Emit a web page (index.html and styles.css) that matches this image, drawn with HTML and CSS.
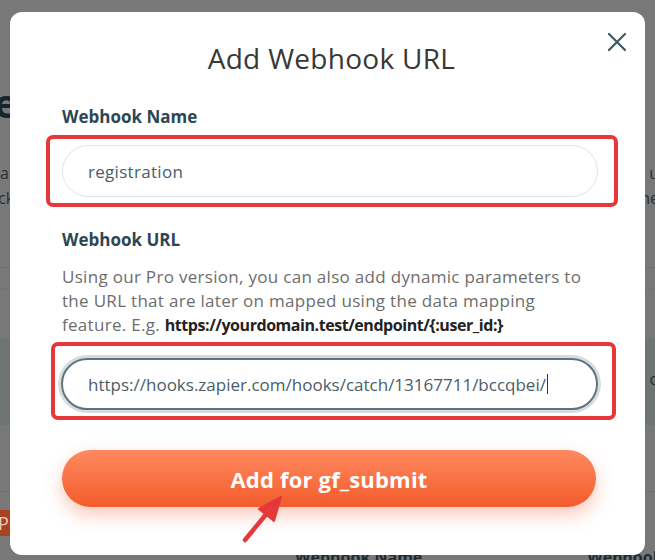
FILE: index.html
```html
<!DOCTYPE html>
<html lang="en">
<head>
<meta charset="utf-8">
<title>Add Webhook URL</title>
<link rel="stylesheet" href="styles.css">
</head>
<body>
<div class="page">
  <div class="bg-row r-head"><span class="bg-h">e</span></div>
  <div class="bg-row r-t1"><span class="bg-t">a</span><span class="bg-t">u</span></div>
  <div class="bg-row r-t2"><span class="bg-t">ck</span><span class="bg-t">ne</span></div>
  <div class="bg-line l1"></div>
  <div class="bg-line l2"></div>
  <div class="bg-block"><span></span><span class="bg-t">o</span></div>
  <div class="bg-line l3"></div>
  <div class="bg-row r-btn"><span class="bg-pro">Pr</span></div>
  <div class="bg-row r-th"><span class="th1">Webhook Name</span><span class="th2">Webhook</span></div>
</div>

<div class="overlay">
  <div class="modal">
    <button class="close" aria-label="Close">
      <svg width="20" height="20" viewBox="0 0 20 20"><path d="M2 2 L18 18 M18 2 L2 18" stroke="#3e5866" stroke-width="2.2" stroke-linecap="round" fill="none"/></svg>
    </button>
    <h2 class="title">Add Webhook URL</h2>
    <label class="label">Webhook Name</label>
    <div class="hl hl-1">
      <div class="input">registration</div>
    </div>
    <label class="label label-url">Webhook URL</label>
    <p class="desc">Using our Pro version, you can also add dynamic parameters to the URL that are later on mapped using the data mapping feature. E.g. <b>https://yourdomain.test/endpoint/{:user_id:}</b></p>
    <div class="hl hl-2">
      <div class="input focus">https://hooks.zapier.com/hooks/catch/13167711/bccqbei/<span class="caret"></span></div>
    </div>
    <button class="submit">Add for gf_submit</button>
  </div>
  <svg class="arrow" width="655" height="560" viewBox="0 0 655 560">
    <line x1="245" y1="540" x2="268" y2="512" stroke="#e5383b" stroke-width="4.5" stroke-linecap="round"/>
    <polygon points="281,497 259,509 274,521" fill="#e5383b" stroke="#e5383b" stroke-width="2" stroke-linejoin="round"/>
  </svg>
</div>
</body>
</html>
```
FILE: styles.css
```css
* { box-sizing: border-box; }
html, body { margin: 0; padding: 0; }
body {
  width: 655px;
  height: 560px;
  overflow: hidden;
  background: #787878;
  font-family: "Open Sans", "Lato", sans-serif;
  position: relative;
}
.page {
  display: flex;
  flex-direction: column;
  padding-top: 82px;
  height: 560px;
  overflow: hidden;
}
.bg-row {
  display: flex;
  justify-content: space-between;
  align-items: center;
  white-space: nowrap;
  flex-shrink: 0;
}
.r-head { height: 42px; }
.bg-h { font-size: 40px; font-weight: 700; color: #18252d; margin-left: -6px; line-height: 1; }
.r-t1 { height: 22px; margin-top: 38px; }
.r-t2 { height: 22px; margin-top: 3px; }
.bg-t { font-size: 16px; color: #2a2f33; }
.r-t1 .bg-t:last-child, .r-t2 .bg-t:last-child { margin-right: -4px; }
.r-t2 .bg-t:first-child { margin-left: -2px; }
.bg-line { height: 1px; background: #6e6e6e; flex-shrink: 0; }
.l1 { margin-top: 58px; }
.l2 { margin-top: 20px; background: #747474; }
.bg-block {
  margin-top: 50px;
  height: 86px;
  flex-shrink: 0;
  background: #6e7373;
  display: flex;
  justify-content: space-between;
  align-items: center;
}
.bg-block .bg-t { margin-right: -4px; margin-top: -6px; }
.l3 { margin-top: 66px; }
.r-btn { height: 30px; margin-top: 16px; }
.bg-pro {
  background: #a8431f;
  color: #e9c9bb;
  font-size: 18px;
  padding: 1px 6px;
  margin-left: -8px;
  border-radius: 0 4px 4px 0;
}
.r-th { margin-top: 8px; justify-content: flex-start; height: 22px; }
.th1 { margin-left: 295px; font-size: 16px; font-weight: 700; color: #1f2b33; }
.th2 { margin-left: 165px; font-size: 16px; font-weight: 700; color: #1f2b33; }

.overlay {
  position: absolute;
  inset: 0;
}
.modal {
  position: absolute;
  left: 10px;
  top: 12px;
  width: 635px;
  height: 543px;
  background: #fff;
  border-radius: 12px;
  padding: 30px 48px 0 52px;
  display: flex;
  flex-direction: column;
}
.close {
  position: absolute;
  right: 18px;
  top: 20px;
  width: 20px;
  height: 20px;
  padding: 0;
  border: 0;
  background: none;
  display: flex;
}
.title {
  margin: 0;
  text-align: center;
  font-size: 28px;
  line-height: 32px;
  letter-spacing: 0.3px;
  font-weight: 400;
  color: #383838;
  margin-right: -4px;
}
.label {
  display: block;
  font-size: 17px;
  line-height: 22px;
  font-weight: 700;
  color: #2d4654;
  margin-top: 32px;
}
.label-url { margin-top: 22px; }
.hl {
  border: 4px solid #e5383b;
  border-radius: 7px;
}
.hl-1 {
  margin: 7px -21px 0 -16px;
  padding: 6px 16px 6px 12px;
}
.hl-2 {
  margin: 5px -19px 0 -11px;
  padding: 12px 14px 6px 6px;
}
.input {
  height: 52px;
  border-radius: 26px;
  border: 1px solid #dfe5e8;
  display: flex;
  align-items: center;
  padding-left: 25px;
  font-size: 17px;
  letter-spacing: 0.3px;
  color: #4a5d68;
}
.input.focus {
  border: 2px solid #5f727d;
  box-shadow: 0 0 0 3px #d5dde1;
  padding-left: 25px;
  font-size: 17px;
  letter-spacing: 0;
}
.caret {
  display: inline-block;
  width: 1px;
  height: 20px;
  background: #333;
  margin-left: 1px;
}
.desc {
  margin: 14px 0 0 0;
  font-size: 17px;
  line-height: 24px;
  letter-spacing: 0.3px;
  color: #6d6d6d;
}
.desc b { color: #222; font-weight: 700; font-size: 16px; letter-spacing: -0.45px; }
.submit {
  margin-top: 30px;
  height: 57px;
  border: 0;
  border-radius: 29px;
  background: linear-gradient(#ff8a60, #f35b2b);
  color: #fff;
  font-family: inherit;
  font-size: 22px;
  letter-spacing: 0.2px;
  font-weight: 700;
  box-shadow: 0 8px 18px rgba(243, 100, 60, 0.35);
  width: 534px;
}
.arrow {
  position: absolute;
  left: 0;
  top: 0;
  pointer-events: none;
}
```
